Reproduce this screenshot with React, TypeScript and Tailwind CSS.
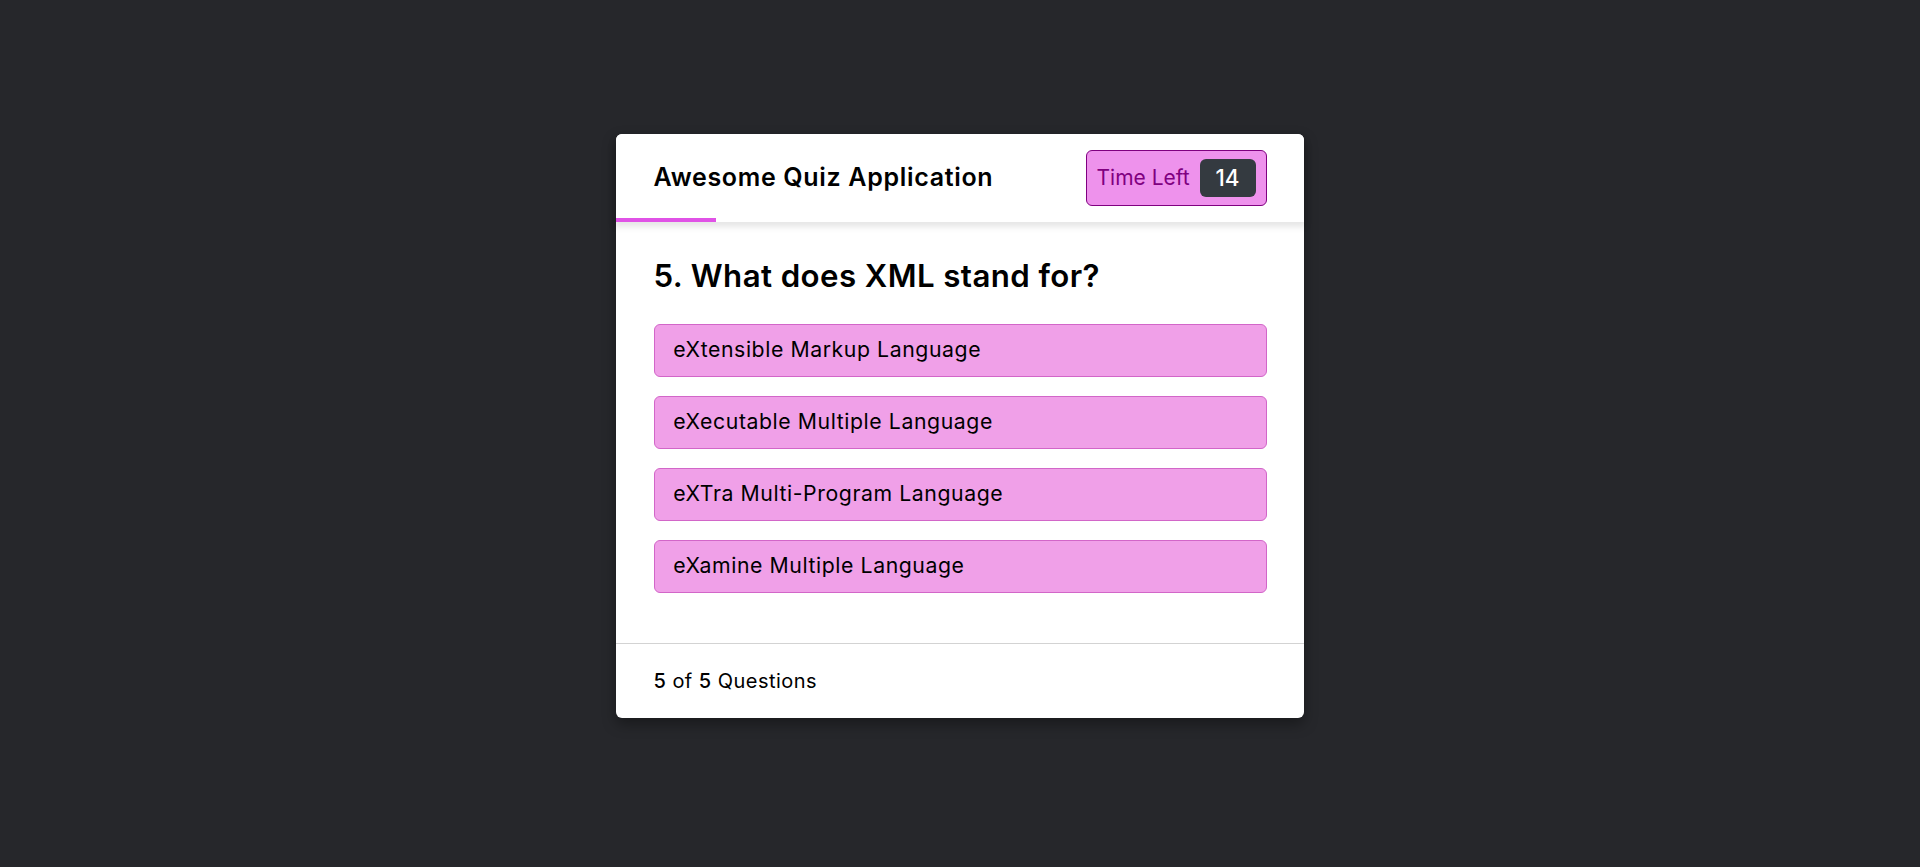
const OPTIONS = [
  "eXtensible Markup Language",
  "eXecutable Multiple Language",
  "eXTra Multi-Program Language",
  "eXamine Multiple Language",
];

const App = () => {
  return (
    <div
      className="min-h-screen w-full bg-[#26272b] flex justify-center pt-[134px]"
      style={{ fontFamily: "Inter, 'Open Sans', sans-serif" }}
    >
      <div className="w-[688px] h-fit bg-white rounded-[6px] shadow-[0_6px_14px_rgba(0,0,0,0.35)] flex flex-col">
        {/* Header with timer */}
        <header className="relative z-10 h-[87.5px] px-[37.5px] flex items-center justify-between bg-white rounded-t-[6px] shadow-[0_3.75px_6.25px_1.25px_rgba(0,0,0,0.1)]">
          <div className="text-[25px] font-semibold tracking-[0.027em] text-black">Awesome Quiz Application</div>
          <div className="w-[181px] h-[56px] px-[10px] flex items-center justify-between bg-[#ee92ec] border border-[#800080] rounded-[6px] text-[#800080]">
            <span className="text-[21px] font-normal">Time Left</span>
            <span className="w-[56px] h-[37.5px] rounded-[6px] bg-[#343a40] text-white text-[22.5px] font-medium flex items-center justify-center">
              14
            </span>
          </div>
          <div className="absolute left-0 bottom-0 h-[3.75px] w-[100px] bg-[#e052e6]"></div>
        </header>

        {/* Question */}
        <section className="px-[37.5px] pt-[31.25px] pb-[50px]">
          <div className="text-[31.25px] leading-[46px] font-semibold tracking-[0.013em] text-black">
            5. What does XML stand for?
          </div>
          <div className="mt-[25px] flex flex-col gap-[19px]">
            {OPTIONS.map((opt) => (
              <div
                key={opt}
                className="h-[53px] px-[18.75px] flex items-center bg-[#f0a0e8] border-[1.25px] border-[#d266c8] rounded-[6px] text-[21.25px] tracking-[0.027em] text-black"
              >
                {opt}
              </div>
            ))}
          </div>
        </section>

        {/* Footer */}
        <footer className="h-[75px] px-[37.5px] flex items-center border-t-[1.25px] border-[#d3d3d3] text-[20px] tracking-[0.023em] text-black">
          <span>
            <span className="font-medium">5</span> of <span className="font-medium">5</span> Questions
          </span>
        </footer>
      </div>
    </div>
  );
};

export default App;
